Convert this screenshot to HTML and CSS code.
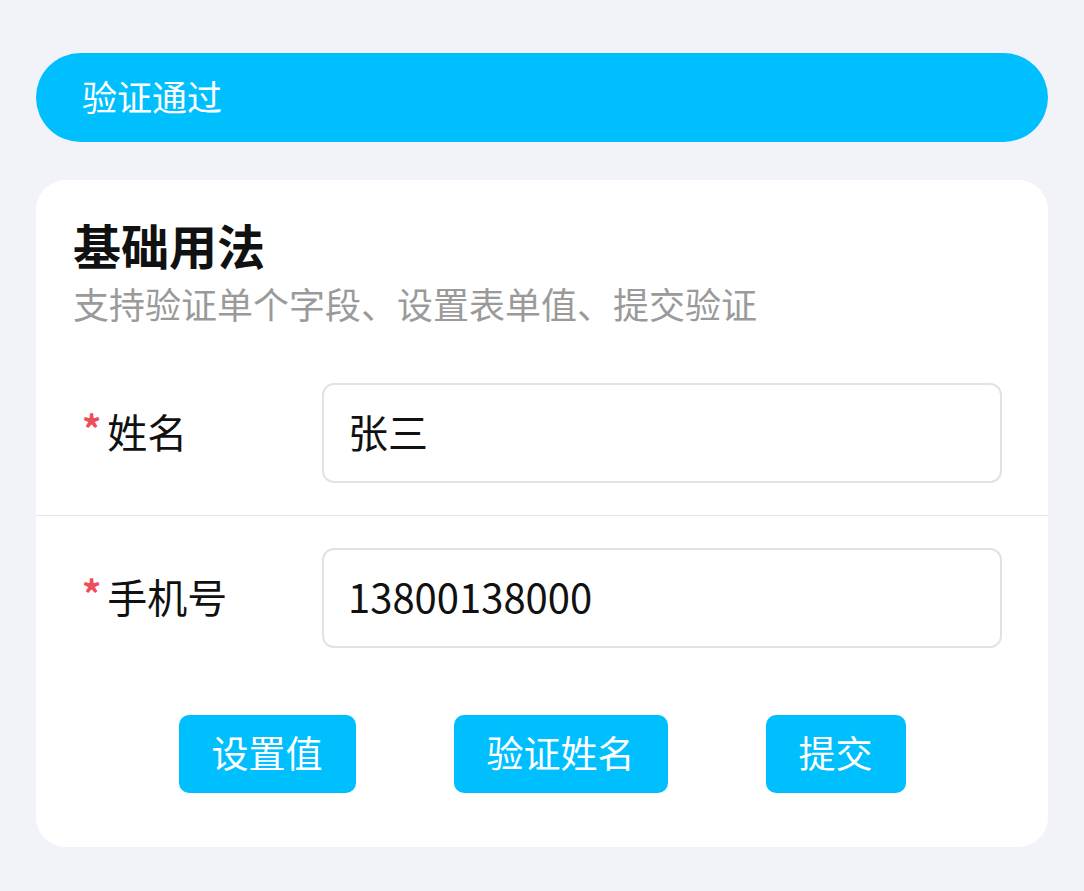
FILE: index.html
```html
<!DOCTYPE html>
<html lang="zh-CN">
  <head>
    <meta charset="UTF-8" />
    <meta name="viewport" content="width=device-width, initial-scale=1.0" />
    <title>表单验证</title>
    <link rel="stylesheet" href="styles.css">
  </head>
  <body>
    <div class="page">
      <div class="toast">验证通过</div>

      <div class="card">
        <div class="card-head">
          <div class="title">基础用法</div>
          <div class="desc">支持验证单个字段、设置表单值、提交验证</div>
        </div>

        <div class="form">
          <div class="row">
            <label class="label"><span class="star">*</span>姓名</label>
            <input class="input" type="text" value="张三" />
          </div>
          <div class="row">
            <label class="label"><span class="star">*</span>手机号</label>
            <input class="input" type="text" value="13800138000" />
          </div>
        </div>

        <div class="actions">
          <button class="btn">设置值</button>
          <button class="btn">验证姓名</button>
          <button class="btn">提交</button>
        </div>
      </div>
    </div>
  </body>
</html>
```

FILE: styles.css
```css
body {
  margin: 0;
  background-color: #f2f3f8;
  font-family: "Noto Sans CJK SC", "Noto Sans", sans-serif;
}

.page {
  padding: 53px 36px 43px;
}

.toast {
  height: 89px;
  box-sizing: border-box;
  border-radius: 45px;
  background-color: #00bfff;
  color: white;
  font-size: 35px;
  display: flex;
  align-items: center;
  padding: 0 0 5px 46px;
}

.card {
  margin-top: 38px;
  background-color: white;
  border-radius: 30px;
  padding: 34px 0 54px;
}

.card-head {
  padding: 0 37px;
}

.title {
  font-size: 48px;
  font-weight: bold;
  line-height: 60px;
  color: #111;
}

.desc {
  margin-top: 6px;
  font-size: 36px;
  line-height: 47px;
  color: #9a9a9a;
}

.form {
  margin-top: 24px;
}

.row {
  display: flex;
  align-items: center;
  padding: 32px 46px;
}

.row + .row {
  border-top: 1px solid #e6e6e6;
}

.label {
  width: 240px;
  flex-shrink: 0;
  font-size: 40px;
  color: #111;
  display: flex;
  align-items: center;
  margin-top: -5px;
}

.star {
  color: #ee4d5a;
  font-size: 38px;
  font-weight: bold;
  margin-right: 6px;
  margin-top: -6px;
}

.input {
  flex: 1;
  height: 100px;
  box-sizing: border-box;
  border: 2px solid #e2e2e2;
  border-radius: 12px;
  padding: 0 24px 4px;
  font-family: inherit;
  font-size: 40px;
  color: #111;
  outline: none;
}

.actions {
  margin-top: 35px;
  display: flex;
  justify-content: center;
  gap: 98px;
}

.btn {
  height: 78px;
  padding: 0 33px 4px;
  border: none;
  border-radius: 10px;
  background-color: #00bfff;
  color: white;
  font-family: inherit;
  font-size: 37px;
  cursor: pointer;
}
```
